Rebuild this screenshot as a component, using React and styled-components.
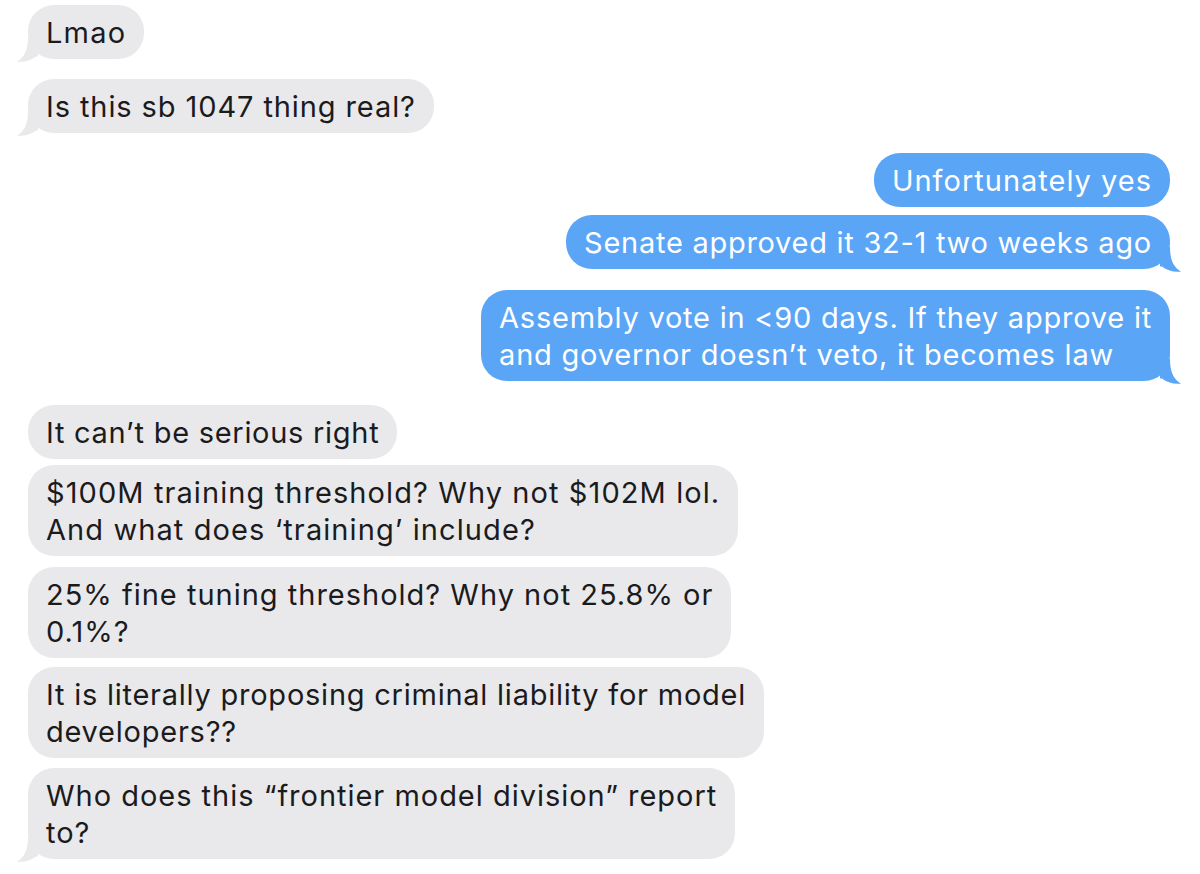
import styled, { createGlobalStyle } from "styled-components";

const Global = createGlobalStyle`
  body {
    margin: 0;
    background: #ffffff;
    font-family: Inter, "Liberation Sans", Arial, sans-serif;
  }
`;

const Thread = styled.div`
  width: 1200px;
  height: 874px;
  box-sizing: border-box;
  padding: 5px 30px 0 28px;
  display: flex;
  flex-direction: column;
  overflow: hidden;
`;

const Row = styled.div`
  display: flex;
  justify-content: ${(p) => (p.$me ? "flex-end" : "flex-start")};
  margin-top: ${(p) => p.$gap}px;
`;

const Bubble = styled.div`
  position: relative;
  box-sizing: border-box;
  padding: 9px 18px 8px 18px;
  border-radius: 26px;
  font-size: 29px;
  line-height: 37px;
  letter-spacing: ${(p) => p.$ls || 0}px;
  background: ${(p) => (p.$me ? "#5aa5f6" : "#e9e9eb")};
  color: ${(p) => (p.$me ? "#ffffff" : "#1b1b1d")};
`;

const Line = styled.span`
  display: block;
  white-space: nowrap;
`;

const Tail = styled.svg`
  position: absolute;
  bottom: -4px;
  width: 22px;
  height: 26px;
  ${(p) => (p.$me ? "right: -12px;" : "left: -12px; transform: scaleX(-1);")}
`;

const messages = [
  { me: false, gap: 0, tail: true, ls: 1.2, lines: ["Lmao"] },
  { me: false, gap: 20, tail: true, ls: 0.9, lines: ["Is this sb 1047 thing real?"] },
  { me: true, gap: 20, ls: 1.0, lines: ["Unfortunately yes"] },
  { me: true, gap: 8, tail: true, ls: 0.73, lines: ["Senate approved it 32-1 two weeks ago"] },
  {
    me: true,
    gap: 21,
    tail: true,
    ls: 0.78,
    lines: [
      "Assembly vote in <90 days. If they approve it",
      "and governor doesn’t veto, it becomes law",
    ],
  },
  { me: false, gap: 24, ls: 0.72, lines: ["It can’t be serious right"] },
  {
    me: false,
    gap: 6,
    ls: 1.09,
    lines: [
      "$100M training threshold? Why not $102M lol.",
      "And what does ‘training’ include?",
    ],
  },
  {
    me: false,
    gap: 11,
    ls: 1.0,
    lines: ["25% fine tuning threshold? Why not 25.8% or", "0.1%?"],
  },
  {
    me: false,
    gap: 9,
    ls: 0.76,
    lines: ["It is literally proposing criminal liability for model", "developers??"],
  },
  {
    me: false,
    gap: 10,
    tail: true,
    ls: 0.98,
    lines: ["Who does this “frontier model division” report", "to?"],
  },
];

const BubbleTail = ({ me }) => (
  <Tail $me={me} viewBox="0 0 22 26">
    <path
      d="M0 0 H10 C10 12 13 20 21 24.5 C14 25.5 7 23.5 2 19.5 L0 19.5 Z"
      fill={me ? "#5aa5f6" : "#e9e9eb"}
    />
  </Tail>
);

export default function App() {
  return (
    <>
      <Global />
      <Thread>
        {messages.map((m, i) => (
          <Row key={i} $me={m.me} $gap={m.gap}>
            <Bubble $me={m.me} $ls={m.ls}>
              {m.lines.map((l, j) => (
                <Line key={j}>{l}</Line>
              ))}
              {m.tail && <BubbleTail me={m.me} />}
            </Bubble>
          </Row>
        ))}
      </Thread>
    </>
  );
}
